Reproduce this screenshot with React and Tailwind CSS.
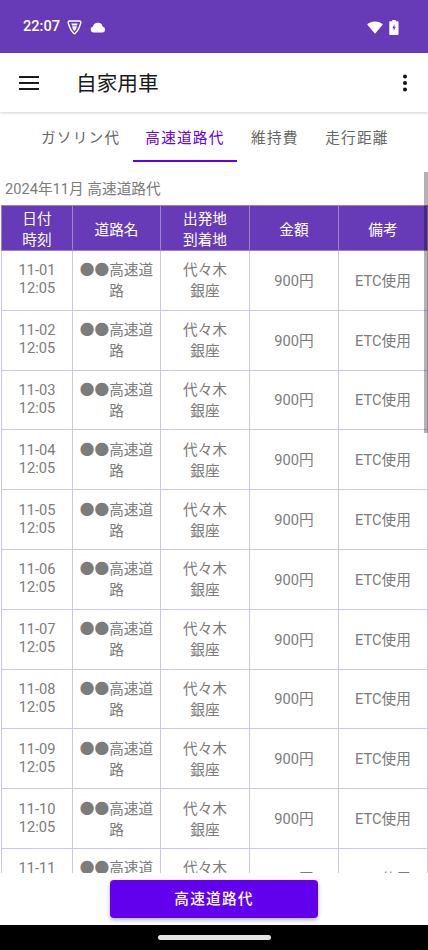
import React from 'react';

const rows = ['11-01','11-02','11-03','11-04','11-05','11-06','11-07','11-08','11-09','11-10','11-11'];
const tabs = ['ガソリン代', '高速道路代', '維持費', '走行距離'];

const ShieldIcon = () => (
  <svg className="w-[15px] h-[15px]" viewBox="0 0 15 15" fill="none">
    <path d="M2.500 1h10c1 0 1.600 1 1.300 1.900l-1.500 4.400c-.7 2-2.600 4.700-4.200 6.300-.3.300-.9.300-1.200 0-1.600-1.600-3.500-4.300-4.200-6.300L1.200 2.900C.9 2 1.500 1 2.500 1z" stroke="#fff" strokeWidth="1.400" strokeLinejoin="round" />
    <path d="M4.300 3.400h6.400L10 5.400H5L4.300 3.400z" fill="#fff" />
    <path d="M5.300 6.200h4.400c.2 1.500-.8 3.700-2.200 4.900-1.400-1.200-2.400-3.400-2.200-4.900z" fill="#fff" />
  </svg>
);

const CloudIcon = () => (
  <svg className="w-[16px] h-[11px]" viewBox="0 0 16 11" fill="#fff">
    <path d="M3.600 10.600A3.100 3.100 0 0 1 3 4.500 5 5 0 0 1 8 .8a4.600 4.600 0 0 1 4.600 3.700 3.100 3.100 0 0 1-.2 6.100H3.600z" />
  </svg>
);

const WifiIcon = () => (
  <svg className="w-[16px] h-[13px]" viewBox="0 0 16 13" fill="#fff">
    <path d="M8 12.800.2 3.600C2.200 1.600 4.900.4 8 .4s5.800 1.200 7.800 3.200L8 12.800z" />
  </svg>
);

const BatteryIcon = () => (
  <svg className="w-[10px] h-[15px]" viewBox="0 0 10 15">
    <path d="M3.200 0h3.600v1.200h2c.4 0 .7.300.7.700v12.400c0 .4-.3.700-.7.700H1c-.4 0-.7-.3-.7-.7V1.900c0-.4.300-.7.700-.7h2.200V0z" fill="#fff" />
    <path d="M5.500 4 3.400 8.200h1.300V11l2-4.200H5.400L5.500 4z" fill="#673ab7" />
  </svg>
);

const MenuIcon = () => (
  <svg className="w-5 h-[14px]" viewBox="0 0 20 14" fill="#1a1a1a">
    <rect y="0" width="20" height="2" />
    <rect y="6" width="20" height="2" />
    <rect y="12" width="20" height="2" />
  </svg>
);

const MoreIcon = () => (
  <svg className="w-1 h-[18px]" viewBox="0 0 4 18" fill="#111">
    <circle cx="2" cy="2.500" r="2" />
    <circle cx="2" cy="9" r="2" />
    <circle cx="2" cy="15.500" r="2" />
  </svg>
);

const App = () => {
  return (
    <div className="relative flex flex-col w-[428px] h-[950px] overflow-hidden bg-white font-['Roboto','Noto_Sans_CJK_JP',sans-serif]">
      {/* status bar */}
      <div className="flex items-center h-[53px] shrink-0 pt-[1px] pl-[23px] pr-[29px] bg-[#673ab7] text-white">
        <span className="text-[14.600px] font-medium mr-[7px]">22:07</span>
        <ShieldIcon />
        <span className="w-2" />
        <CloudIcon />
        <span className="flex-1" />
        <WifiIcon />
        <span className="w-[6px]" />
        <BatteryIcon />
      </div>

      {/* app bar */}
      <div className="relative z-10 flex items-center h-[59px] shrink-0 pl-[19px] pr-[21px] bg-white shadow-[0_1px_3px_rgba(0,0,0,0.18)]">
        <MenuIcon />
        <span className="ml-[37px] pt-[3px] text-[20.670px] text-[#1a1a1a]">自家用車</span>
        <span className="flex-1" />
        <MoreIcon />
      </div>

      {/* scroll area */}
      <div className="relative flex-1 min-h-0 overflow-hidden">
        <div className="flex h-[50px] pl-[28.500px]">
          {tabs.map((t, i) => (
            <div
              key={t}
              className={'flex items-center justify-center px-[12.500px] pt-[4px] text-[14.670px] tracking-[1.200px] whitespace-nowrap ' + (i === 1 ? 'border-b-2 border-[#6200ee] text-[#6200ee]' : 'border-b-2 border-transparent text-[#666666]') + (i > 1 ? ' ml-[1.500px]' : '')}
            >
              {t}
            </div>
          ))}
        </div>

        <div className="pl-[5px] pt-[17px] pb-[6px] h-[43px] text-[14.670px] leading-[20px] text-[#7c7c7c]">2024年11月 高速道路代</div>

        <table className="ml-[1px] w-[426px] table-fixed border-collapse text-center text-[14.670px] leading-[normal]">
          <colgroup>
            <col className="w-[71px]" />
            <col className="w-[88px]" />
            <col className="w-[89px]" />
            <col className="w-[89px]" />
            <col className="w-[89px]" />
          </colgroup>
          <thead>
            <tr className="h-[45px] bg-[#673ab7] text-white">
              <th className="border border-[#9a84c4] p-0 font-normal">日付<br />時刻</th>
              <th className="border border-[#9a84c4] p-0 font-normal">道路名</th>
              <th className="border border-[#9a84c4] p-0 font-normal">出発地<br />到着地</th>
              <th className="border border-[#9a84c4] p-0 font-normal">金額</th>
              <th className="border border-[#9a84c4] p-0 font-normal">備考</th>
            </tr>
          </thead>
          <tbody className="text-[#7c7c7c]">
            {rows.map((d) => (
              <tr key={d} className="h-[59.800px]">
                <td className="border border-[#d1c4e9] p-0 pb-[2px]">{d}<br />12:05</td>
                <td className="border border-[#d1c4e9] px-[6px] pt-0 pb-[2px]">●●高速道路</td>
                <td className="border border-[#d1c4e9] p-0 pb-[2px]">代々木<br />銀座</td>
                <td className="border border-[#d1c4e9] p-0 pb-[2px]">900円</td>
                <td className="border border-[#d1c4e9] p-0 pb-[2px]">ETC使用</td>
              </tr>
            ))}
          </tbody>
        </table>

        {/* scrollbar */}
        <div className="absolute right-0 top-[60px] w-[4px] h-[261px] bg-black/30" />
      </div>

      {/* bottom button */}
      <div className="flex justify-center h-[52px] shrink-0 pt-[7px] bg-white">
        <button className="w-[208px] h-[38px] rounded-[4px] bg-[#6200ee] text-white text-[14.670px] font-medium tracking-[1.200px] shadow-[0_2px_4px_rgba(0,0,0,0.3)]">
          高速道路代
        </button>
      </div>

      {/* nav bar */}
      <div className="flex items-center justify-center h-[25px] shrink-0 bg-black">
        <div className="w-[113px] h-[5px] rounded-full bg-[#e4e4e4]" />
      </div>
    </div>
  );
};

export default App;
